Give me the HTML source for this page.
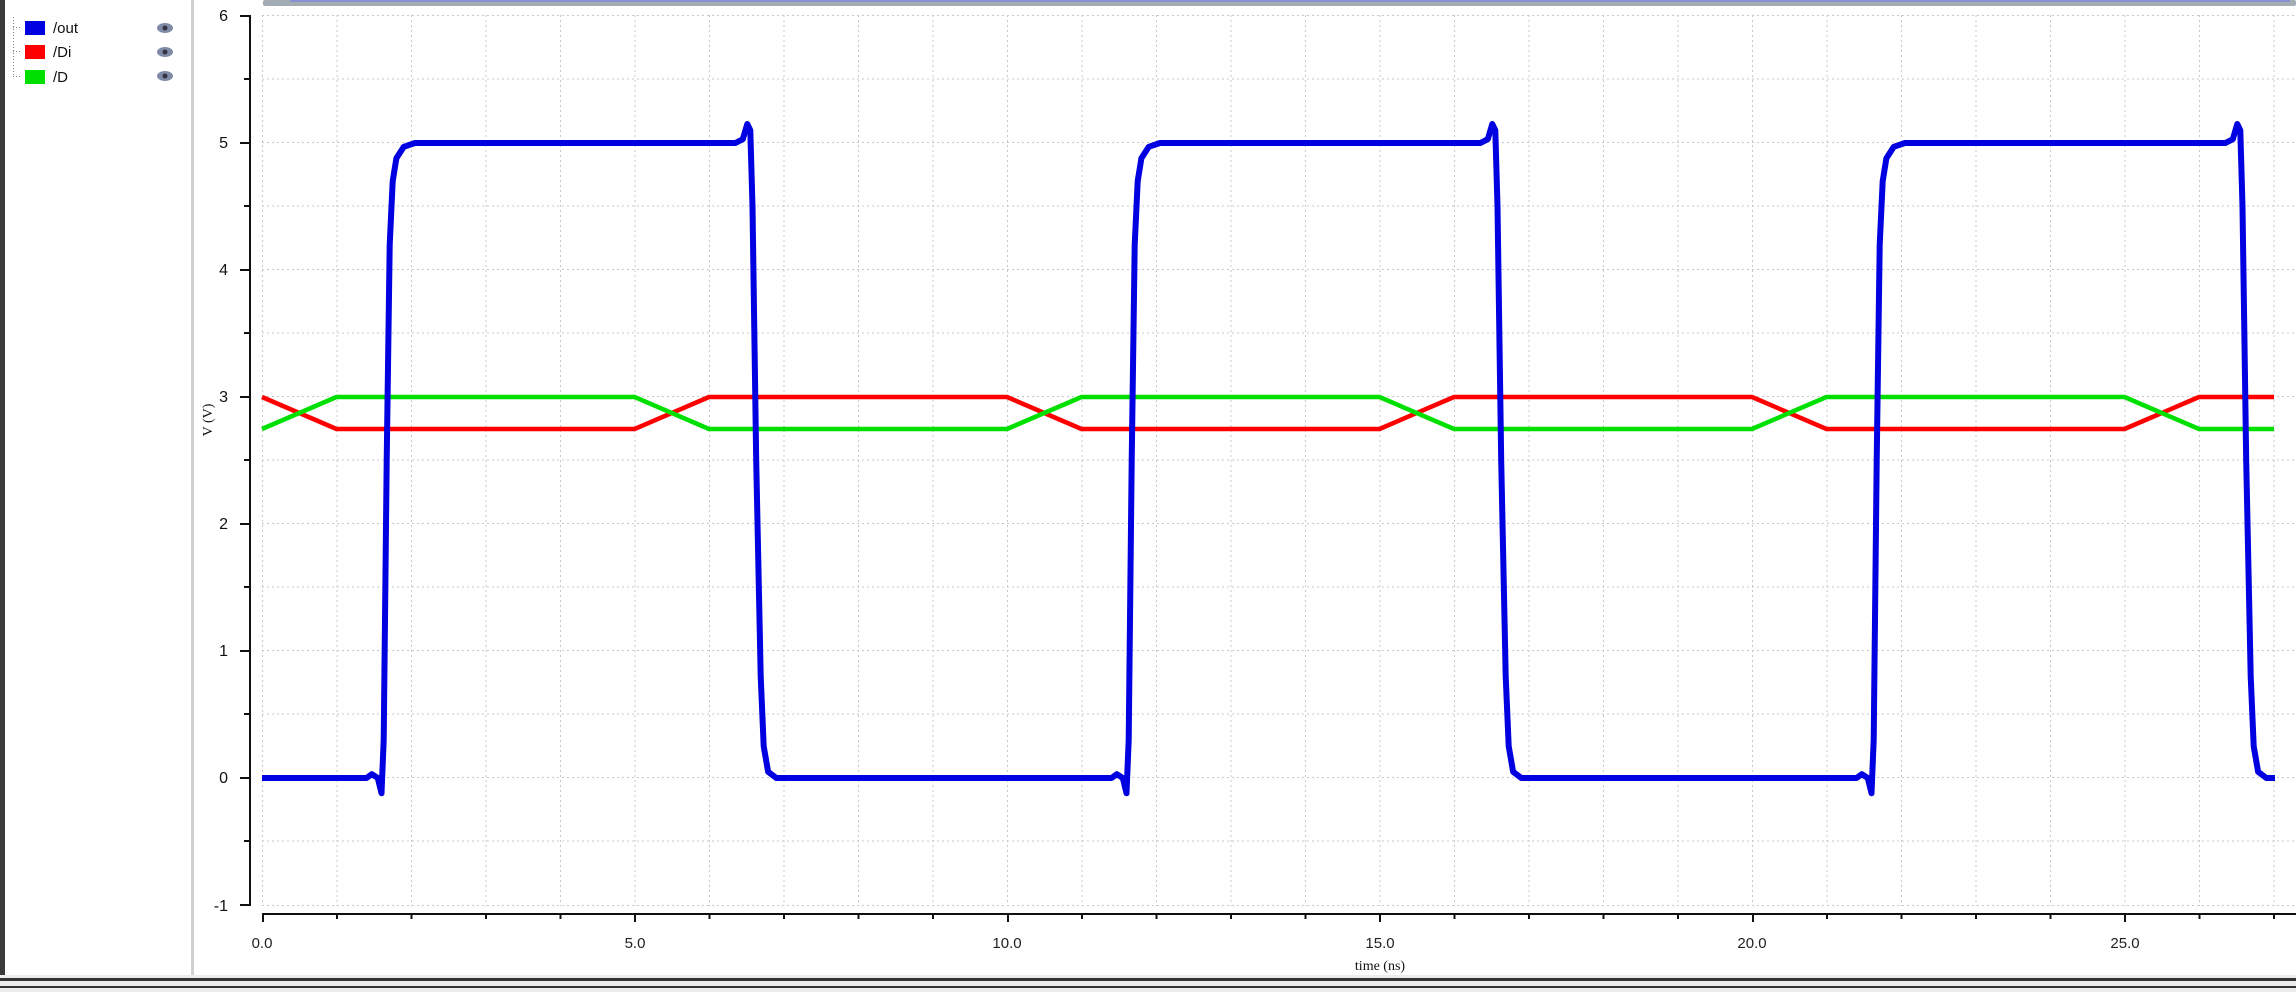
<!DOCTYPE html>
<html><head><meta charset="utf-8"><style>
html,body{margin:0;padding:0;width:2296px;height:992px;overflow:hidden;background:#fff;font-family:"Liberation Sans",sans-serif;}
</style></head><body>
<svg width="2296" height="992" xmlns="http://www.w3.org/2000/svg" style="position:absolute;left:0;top:0">
<defs>
<clipPath id="pc"><rect x="250" y="0" width="2046" height="975"/></clipPath>
<path id="blue" d="M262,778 L366.6,778 L371.8,774.2 L377.8,778 L381.5,793.2 L383.7,739.9 L386.7,460.5 L389.7,244.6 L392.7,181.1 L396.4,158.2 L403.8,146.8 L415,143 L735.4,143 L742.8,139.2 L747.3,124 L750.3,130.3 L752.5,206.5 L756.2,460.5 L760.7,676.4 L763.7,746.3 L768.1,771.7 L776.3,778 L1007,778"/>
</defs>
<rect x="0" y="0" width="5" height="975" fill="#3a3a3a"/>
<rect x="191" y="0" width="3" height="975" fill="#cfcfcf"/>
<rect x="263" y="0" width="2033" height="6" fill="#a3abb3" rx="2"/>
<rect x="290" y="0" width="2000" height="2" fill="#8890d0"/>
<g stroke="#888" stroke-dasharray="1,2" fill="none">
<line x1="13.5" y1="17" x2="13.5" y2="77"/>
<line x1="13" y1="27.5" x2="22" y2="27.5"/>
<line x1="13" y1="51.5" x2="22" y2="51.5"/>
<line x1="13" y1="76.5" x2="22" y2="76.5"/>
</g>
<rect x="25" y="21" width="20" height="14" fill="#0000e0"/>
<rect x="25" y="45" width="20" height="14" fill="#ff0000"/>
<rect x="25" y="70" width="20" height="14" fill="#00e000"/>
<g font-size="15" fill="#111">
<text x="53" y="33">/out</text><text x="53" y="57">/Di</text><text x="53" y="82">/D</text>
</g>
<g fill="#7e8aa6"><ellipse cx="165" cy="28" rx="8" ry="5"/><ellipse cx="165" cy="52" rx="8" ry="5"/><ellipse cx="165" cy="76" rx="8" ry="5"/></g>
<g fill="#334"><circle cx="165" cy="28" r="2.5"/><circle cx="165" cy="52" r="2.5"/><circle cx="165" cy="76" r="2.5"/></g>
<g stroke="#c8c8c8" stroke-dasharray="2,3" stroke-width="1">
<line x1="262" y1="15.5" x2="2296" y2="15.5"/><line x1="262" y1="79" x2="2296" y2="79"/><line x1="262" y1="142.5" x2="2296" y2="142.5"/><line x1="262" y1="206" x2="2296" y2="206"/><line x1="262" y1="269.5" x2="2296" y2="269.5"/><line x1="262" y1="333" x2="2296" y2="333"/><line x1="262" y1="396.5" x2="2296" y2="396.5"/><line x1="262" y1="460" x2="2296" y2="460"/><line x1="262" y1="523.5" x2="2296" y2="523.5"/><line x1="262" y1="587" x2="2296" y2="587"/><line x1="262" y1="650.5" x2="2296" y2="650.5"/><line x1="262" y1="714" x2="2296" y2="714"/><line x1="262" y1="777.5" x2="2296" y2="777.5"/><line x1="262" y1="841" x2="2296" y2="841"/><line x1="262" y1="905.5" x2="2296" y2="905.5"/>
</g>
<g stroke="#c8c8c8" stroke-dasharray="2,3" stroke-width="1" id="vg">
<line x1="262.5" y1="15" x2="262.5" y2="906"/><line x1="337" y1="15" x2="337" y2="906"/><line x1="411.5" y1="15" x2="411.5" y2="906"/><line x1="486" y1="15" x2="486" y2="906"/><line x1="560.5" y1="15" x2="560.5" y2="906"/><line x1="635" y1="15" x2="635" y2="906"/><line x1="709.5" y1="15" x2="709.5" y2="906"/><line x1="784" y1="15" x2="784" y2="906"/><line x1="858.5" y1="15" x2="858.5" y2="906"/><line x1="933" y1="15" x2="933" y2="906"/>
</g>
<use href="#vg" transform="translate(745,0)"/><use href="#vg" transform="translate(1490,0)"/>
<g stroke="#111" stroke-width="2" fill="none">
<line x1="250" y1="15" x2="250" y2="906"/>
<line x1="240" y1="16" x2="250" y2="16"/><line x1="240" y1="143" x2="250" y2="143"/><line x1="240" y1="270" x2="250" y2="270"/><line x1="240" y1="397" x2="250" y2="397"/><line x1="240" y1="524" x2="250" y2="524"/><line x1="240" y1="651" x2="250" y2="651"/><line x1="240" y1="778" x2="250" y2="778"/><line x1="240" y1="905" x2="250" y2="905"/>
<line x1="244" y1="79" x2="250" y2="79"/><line x1="244" y1="206" x2="250" y2="206"/><line x1="244" y1="333" x2="250" y2="333"/><line x1="244" y1="460" x2="250" y2="460"/><line x1="244" y1="587" x2="250" y2="587"/><line x1="244" y1="714" x2="250" y2="714"/><line x1="244" y1="841" x2="250" y2="841"/>
</g>
<g font-size="16" fill="#111" text-anchor="end">
<text x="228" y="21">6</text><text x="228" y="148">5</text><text x="228" y="275">4</text><text x="228" y="402">3</text><text x="228" y="529">2</text><text x="228" y="656">1</text><text x="228" y="783">0</text><text x="228" y="911">-1</text>
</g>
<text x="212" y="420" font-size="14" fill="#111" font-family="Liberation Serif,serif" text-anchor="middle" transform="rotate(-90 212 420)">V (V)</text>
<line x1="262" y1="914" x2="2296" y2="914" stroke="#111" stroke-width="2"/>
<g stroke="#111" stroke-width="2" id="xt">
<line x1="263" y1="914" x2="263" y2="922"/><line x1="337" y1="914" x2="337" y2="919"/><line x1="411.5" y1="914" x2="411.5" y2="919"/><line x1="486" y1="914" x2="486" y2="919"/><line x1="560.5" y1="914" x2="560.5" y2="919"/><line x1="635" y1="914" x2="635" y2="922"/><line x1="709.5" y1="914" x2="709.5" y2="919"/><line x1="784" y1="914" x2="784" y2="919"/><line x1="858.5" y1="914" x2="858.5" y2="919"/><line x1="933" y1="914" x2="933" y2="919"/>
</g>
<use href="#xt" transform="translate(745,0)"/><use href="#xt" transform="translate(1490,0)"/>
<g font-size="15" fill="#222" text-anchor="middle">
<text x="262" y="948">0.0</text><text x="635" y="948">5.0</text><text x="1007" y="948">10.0</text><text x="1380" y="948">15.0</text><text x="1752" y="948">20.0</text><text x="2125" y="948">25.0</text>
</g>
<text x="1380" y="970" font-size="14" fill="#111" font-family="Liberation Serif,serif" text-anchor="middle">time (ns)</text>
<g clip-path="url(#pc)" fill="none" stroke-linejoin="round">
<polyline stroke="#ff0000" stroke-width="4.5" points="262,397 336.5,429 634.5,429 709,397 1007,397 1081.5,429 1379.5,429 1454,397 1752,397 1826.5,429 2124.5,429 2199,397 2274,397"/>
<polyline stroke="#00e000" stroke-width="4.5" points="262,429 336.5,397 634.5,397 709,429 1007,429 1081.5,397 1379.5,397 1454,429 1752,429 1826.5,397 2124.5,397 2199,429 2274,429"/>
<g stroke="#0000e0" stroke-width="6">
<use href="#blue"/><use href="#blue" transform="translate(745,0)"/>
</g>
</g>
<clipPath id="c3"><rect x="1740" y="0" width="535" height="975"/></clipPath>
<g clip-path="url(#c3)" fill="none" stroke="#0000e0" stroke-width="6" stroke-linejoin="round"><use href="#blue" transform="translate(1490,0)"/></g>
<rect x="0" y="975" width="2296" height="17" fill="#ececec"/>
<rect x="0" y="978" width="2296" height="3" fill="#333"/>
<rect x="0" y="986" width="2296" height="2" fill="#333"/>
</svg>
</body></html>
